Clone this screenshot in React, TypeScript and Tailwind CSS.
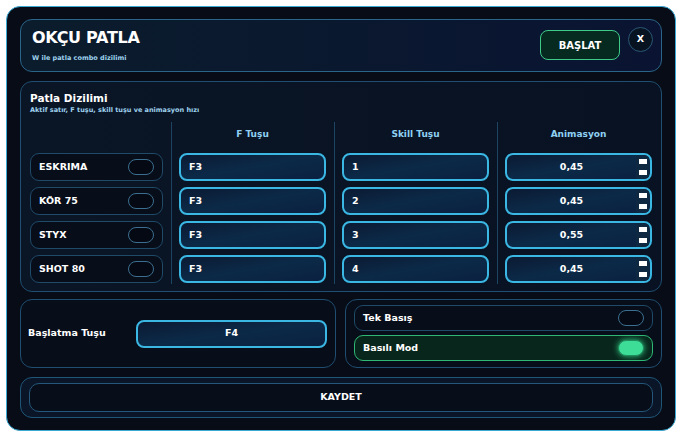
import React from "react";

const font = { fontFamily: '"DejaVu Sans", Verdana, sans-serif' };

function Toggle({ on = false }: { on?: boolean }) {
  return on ? (
    <div className="w-[26px] h-[16px] rounded-[8px] border border-[#1f8a5a] bg-[#3ddc97] shadow-[0_0_6px_#2fcf86]" />
  ) : (
    <div className="w-[26px] h-[16px] rounded-[8px] border border-[#3c6f8f] bg-[#050913]" />
  );
}

function Cyan({ children, center = false, spinner = false }: { children: React.ReactNode; center?: boolean; spinner?: boolean }) {
  return (
    <div className="h-[28px] rounded-[8px] border-2 border-[#3bb7e3] bg-gradient-to-br from-[#0b1a33] via-[#0b2a48] to-[#0b2040] flex items-center overflow-hidden">
      <div className={`flex-1 text-[9.5px] font-bold text-white ${center ? "text-center" : "pl-[8px]"}`}>{children}</div>
      {spinner && (
        <div className="w-[13px] h-full bg-[#0f2842] flex flex-col items-center justify-center gap-[6px] mr-[1px]">
          <div className="w-[8px] h-[5px] bg-white" />
          <div className="w-[8px] h-[5px] bg-white" />
        </div>
      )}
    </div>
  );
}

export default function App() {
  const rows = [
    { name: "ESKRIMA", f: "F3", s: "1", a: "0,45" },
    { name: "KÖR 75", f: "F3", s: "2", a: "0,45" },
    { name: "STYX", f: "F3", s: "3", a: "0,55" },
    { name: "SHOT 80", f: "F3", s: "4", a: "0,45" },
  ];
  return (
    <div className="w-[682px] h-[438px] bg-white pt-[6px] pl-[6px]" style={font}>
      <div className="w-[670px] h-[425px] rounded-[14px] border border-[#3aa9d4] bg-[#070c17] px-[13px] pt-[12px] flex flex-col">
        {/* Header */}
        <div className="h-[53px] rounded-[12px] border border-[#2a6488] bg-gradient-to-r from-[#0b1c2c] to-[#0a1432] flex items-start pl-[11px] pr-[8px]">
          <div className="flex-1 pt-[9px]">
            <div className="text-[16px] font-bold text-white leading-[18px] tracking-[-0.3px]">OKÇU PATLA</div>
            <div className="text-[6.5px] font-bold text-[#9fd2ee] mt-[7px] leading-[9px]">W ile patla combo dizilimi</div>
          </div>
          <div className="mt-[10px] w-[80px] h-[30px] rounded-[8px] border border-[#3ecb88] bg-[#062a20] flex items-center justify-center text-[10px] font-bold text-white">BAŞLAT</div>
          <div className="ml-[8px] mt-[7px] w-[25px] h-[25px] rounded-full border border-[#2b5676] bg-[#081322] flex items-center justify-center text-[9.5px] font-bold text-white">X</div>
        </div>

        {/* Patla Dizilimi */}
        <div className="mt-[9px] h-[211px] rounded-[12px] border border-[#1f4e70] bg-gradient-to-r from-[#0a1526] to-[#081222] pl-[9px] pr-[9px] pt-[10px]">
          <div className="text-[10.5px] font-bold text-white leading-[13px]">Patla Dizilimi</div>
          <div className="text-[6.5px] font-bold text-[#9fd2ee] leading-[9px] mt-[1px]">Aktif satır, F tuşu, skill tuşu ve animasyon hızı</div>
          <div className="flex mt-[7px]">
            <div className="w-[141px] pr-[8px] pt-[31px] flex flex-col gap-[6px]">
              {rows.map((r) => (
                <div key={r.name} className="h-[28px] rounded-[9px] border border-[#1f4a68] bg-[#070d19] flex items-center justify-between pl-[8px] pr-[8px]">
                  <span className="text-[9.5px] font-bold text-white">{r.name}</span>
                  <Toggle />
                </div>
              ))}
            </div>
            {[
              { h: "F Tuşu", k: "f" as const },
              { h: "Skill Tuşu", k: "s" as const },
              { h: "Animasyon", k: "a" as const },
            ].map((c, i) => (
              <div key={c.h} className={`${i === 2 ? "w-[155px]" : "w-[163px]"} border-l border-[#1c4562] pl-[7px] ${i === 2 ? "pr-[0px]" : "pr-[8px]"} pb-[1px]`}>
                <div className="h-[25px] flex items-center justify-center text-[9px] font-bold text-[#8fd0f2]">{c.h}</div>
                <div className="mt-[6px] flex flex-col gap-[6px]">
                  {rows.map((r, j) => (
                    <Cyan key={j} center={i === 2} spinner={i === 2}>
                      {r[c.k]}
                    </Cyan>
                  ))}
                </div>
              </div>
            ))}
          </div>
        </div>

        {/* Bottom row */}
        <div className="mt-[7px] h-[69px] flex gap-[9px]">
          <div className="w-[316px] rounded-[12px] border border-[#1f4e70] bg-[#070d19] flex items-center pl-[7px] pr-[8px]">
            <div className="w-[108px] text-[9.5px] font-bold text-white">Başlatma Tuşu</div>
            <div className="flex-1">
              <Cyan center>F4</Cyan>
            </div>
          </div>
          <div className="flex-1 rounded-[12px] border border-[#1f4e70] bg-[#070d19] px-[8px] pt-[5px] flex flex-col gap-[4px]">
            <div className="h-[26px] rounded-[9px] border border-[#1f4a68] bg-[#070d19] flex items-center justify-between pl-[8px] pr-[8px]">
              <span className="text-[9.5px] font-bold text-white">Tek Basış</span>
              <Toggle />
            </div>
            <div className="h-[26px] rounded-[9px] border border-[#2fb874] bg-[#08261c] flex items-center justify-between pl-[8px] pr-[8px]">
              <span className="text-[9.5px] font-bold text-white">Basılı Mod</span>
              <Toggle on />
            </div>
          </div>
        </div>

        {/* Kaydet */}
        <div className="mt-[9px] h-[41px] rounded-[12px] border border-[#1f5678] bg-[#0a1628] px-[8px] flex items-center">
          <div className="w-full h-[29px] rounded-[10px] border border-[#24577a] bg-[#070d19] flex items-center justify-center text-[9.5px] font-bold text-white">KAYDET</div>
        </div>
      </div>
    </div>
  );
}
